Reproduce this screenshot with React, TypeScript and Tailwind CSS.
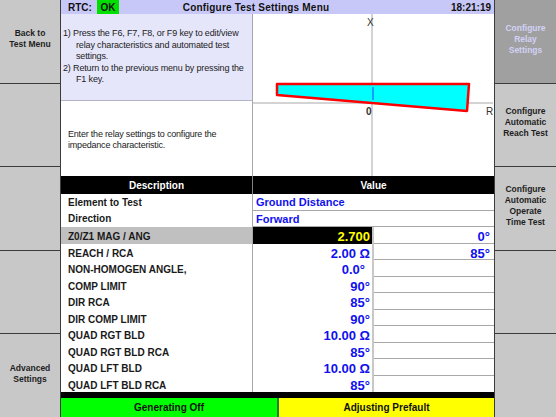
import React from 'react';

type Row = {
  label: string;
  v1?: string;
  v2?: string;
  wide?: string;
  active?: boolean;
  inset?: boolean;
};

const rows: Row[] = [
  { label: 'Element to Test', wide: 'Ground Distance' },
  { label: 'Direction', wide: 'Forward' },
  { label: 'Z0/Z1 MAG / ANG', v1: '2.700', v2: '0°', active: true },
  { label: 'REACH / RCA', v1: '2.00 Ω', v2: '85°' },
  { label: 'NON-HOMOGEN ANGLE,', v1: '0.0°', inset: true },
  { label: 'COMP LIMIT', v1: '90°' },
  { label: 'DIR RCA', v1: '85°' },
  { label: 'DIR COMP LIMIT', v1: '90°' },
  { label: 'QUAD RGT BLD', v1: '10.00 Ω' },
  { label: 'QUAD RGT BLD RCA', v1: '85°' },
  { label: 'QUAD LFT BLD', v1: '10.00 Ω' },
  { label: 'QUAD LFT BLD RCA', v1: '85°' },
];

const SideButton: React.FC<{ lines?: string[]; selected?: boolean }> = ({ lines = [], selected }) => (
  <div
    className={`flex-1 flex items-center justify-center pb-1 border-b border-[#3c3c3c] last:border-b-0 text-center text-[8.5px] leading-[11px] font-bold ${
      selected ? 'bg-[#a0a0a0] text-[#d2d2f6]' : 'bg-[#c8c8c8] text-[#1e1e1e]'
    }`}
  >
    <div>
      {lines.map((l) => (
        <div key={l}>{l}</div>
      ))}
    </div>
  </div>
);

const ImpedanceChart = () => (
  <svg width="240" height="162" viewBox="0 0 240 162" className="block">
    <rect x="0" y="0" width="240" height="162" fill="#ffffff" />
    <line x1="119" y1="0" x2="119" y2="162" stroke="#a8a8a8" strokeWidth="1" />
    <line x1="0" y1="89" x2="240" y2="89" stroke="#a8a8a8" strokeWidth="1" />
    <polygon
      points="24,70 216,70 214,97 24,81"
      fill="#00ffff"
      stroke="#ff0000"
      strokeWidth="2.5"
      strokeLinejoin="round"
    />
    <line x1="120" y1="73" x2="120" y2="86" stroke="#2040ff" strokeWidth="1" />
    <text x="114" y="12" fontSize="10" fill="#333" fontFamily="Liberation Sans, Arial, sans-serif">X</text>
    <text x="113" y="101" fontSize="10" fontWeight="bold" fill="#333" fontFamily="Liberation Sans, Arial, sans-serif">0</text>
    <text x="233" y="101" fontSize="10" fill="#333" fontFamily="Liberation Sans, Arial, sans-serif">R</text>
  </svg>
);

export default function App() {
  return (
    <div className="w-[556px] h-[417px] flex bg-white overflow-hidden font-['Liberation_Sans',Arial,sans-serif]">
      {/* left function keys */}
      <div className="w-[61px] flex flex-col border-r border-[#3c3c3c]">
        <SideButton lines={['Back to', 'Test Menu']} />
        <SideButton />
        <SideButton />
        <SideButton />
        <SideButton lines={['Advanced', 'Settings']} />
      </div>

      {/* center */}
      <div className="w-[433px] flex flex-col">
        <div className="h-[14px] flex items-center bg-[#c8c8f8] text-[10px] font-bold text-[#111]">
          <div className="flex items-center h-full pl-[7px]">
            <span className="w-[29px]">RTC:</span>
            <span className="h-full w-[22px] flex items-center justify-center bg-[#00e000]">OK</span>
          </div>
          <div className="flex-1 text-center pr-[58px] tracking-[0.2px]">Configure Test Settings Menu</div>
          <div className="pr-[3px]">18:21:19</div>
        </div>

        <div className="h-[162px] flex">
          <div className="w-[192px] flex flex-col border-r border-[#a8a8a8]">
            <div className="h-[87px] flex items-center bg-[#e6e6fa] border-b border-[#b4b4c8] px-[2px] text-[9px] leading-[11.5px] tracking-[-0.15px] text-[#222]">
              <div>
                <div className="pl-[13px] -indent-[13px]">
                  1) Press the F6, F7, F8, or F9 key to edit/view relay characteristics and automated test settings.
                </div>
                <div className="pl-[13px] -indent-[13px]">
                  2) Return to the previous menu by pressing the F1 key.
                </div>
              </div>
            </div>
            <div className="flex-1 flex items-center pl-[7px] pr-2 pt-[3px] text-[9px] leading-[11.5px] tracking-[-0.2px] text-[#222]">
              Enter the relay settings to configure the impedance characteristic.
            </div>
          </div>
          <ImpedanceChart />
        </div>

        <div className="h-[18px] grid grid-cols-[192px_241px] bg-black text-white text-[10px] font-bold">
          <div className="flex items-center justify-center border-r border-[#808080]">Description</div>
          <div className="flex items-center justify-center">Value</div>
        </div>

        <div className="flex flex-col">
          {rows.map((r) => (
            <div
              key={r.label}
              className="h-[16.5px] grid grid-cols-[192px_121px_120px] border-b border-[#a8a8a8] last:border-b-0"
            >
              <div
                className={`flex items-center pl-[7px] text-[10px] font-bold text-[#1a1a1a] border-r border-[#a8a8a8] ${
                  r.active ? 'bg-[#c0c0c0]' : 'bg-white'
                }`}
              >
                {r.label}
              </div>
              {r.wide ? (
                <div className="col-span-2 flex items-center pl-[3px] text-[11px] font-bold text-[#1010f0]">
                  {r.wide}
                </div>
              ) : (
                <>
                  <div
                    className={`flex items-center justify-end text-[13px] font-bold border-r-2 border-[#c8c8c8] ${
                      r.inset ? 'pr-[7px]' : 'pr-[2px]'
                    } ${r.active ? 'bg-black text-[#ffff00]' : 'bg-white text-[#1010f0]'}`}
                  >
                    {r.v1}
                  </div>
                  <div className="flex items-center justify-end pr-[4px] text-[13px] font-bold text-[#1010f0]">
                    {r.v2}
                  </div>
                </>
              )}
            </div>
          ))}
        </div>

        <div className="h-[6px] bg-black" />

        <div className="flex-1 flex text-[10px] font-bold text-[#111]">
          <div className="w-[217px] flex items-center justify-center bg-[#00ff00] border-r border-[#208020]">
            Generating Off
          </div>
          <div className="flex-1 flex items-center justify-center bg-[#ffff00] border-l border-[#208020]">
            Adjusting Prefault
          </div>
        </div>
      </div>

      {/* right function keys */}
      <div className="w-[62px] flex flex-col border-l border-[#3c3c3c]">
        <SideButton lines={['Configure', 'Relay', 'Settings']} selected />
        <SideButton lines={['Configure', 'Automatic', 'Reach Test']} />
        <SideButton lines={['Configure', 'Automatic', 'Operate', 'Time Test']} />
        <SideButton />
        <SideButton />
      </div>
    </div>
  );
}
